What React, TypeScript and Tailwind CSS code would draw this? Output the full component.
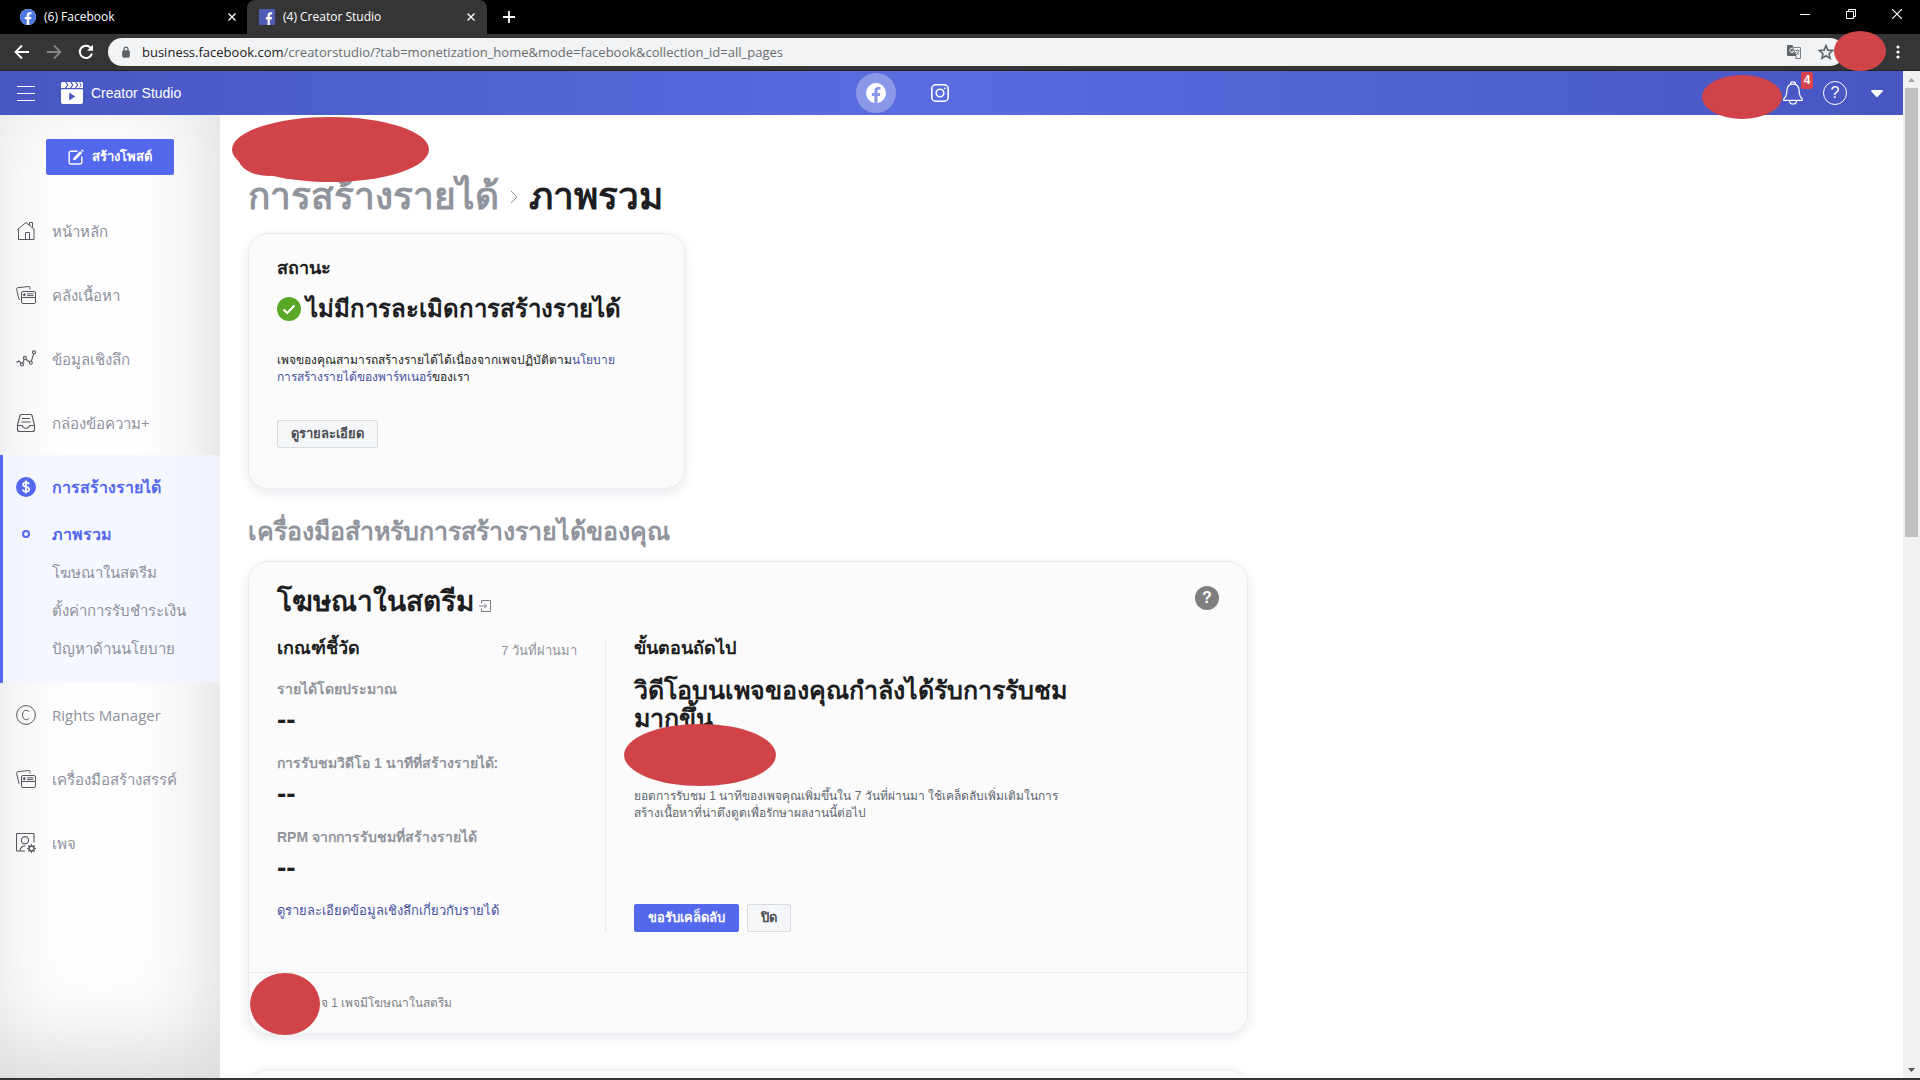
import React from 'react';
import clsx from 'clsx';

type IconProps = { className?: string };

const FacebookRound = ({ className }: IconProps) => (
  <svg viewBox="0 0 24 24" className={className} fill="currentColor">
    <path d="M24 12a12 12 0 1 0-13.9 11.9v-8.4H7.1V12h3V9.4c0-3 1.8-4.7 4.6-4.7 1.3 0 2.6.2 2.6.2v3h-1.5c-1.5 0-2 .9-2 1.9V12h3.4l-.5 3.5h-2.9v8.4A12 12 0 0 0 24 12z" />
  </svg>
);

const FacebookSquare = ({ className }: IconProps) => (
  <svg viewBox="0 0 16 16" className={className}>
    <rect width="16" height="16" fill="#4f5bb5" />
    <path
      d="M8.6 16v-5.6H6.8V8h1.8V6.3c0-2 1.1-3.1 2.9-3.1.8 0 1.5.1 1.7.2v2.1h-1.1c-.9 0-1.2.4-1.2 1.1V8h2.2l-.3 2.4h-1.9V16z"
      fill="#fff"
    />
  </svg>
);

const StudioLogo = () => (
  <svg viewBox="0 0 22 22" className="w-[22px] h-[22px]" fill="#fff">
    <path d="M0 7.200h22V20a2 2 0 0 1-2 2H2a2 2 0 0 1-2-2zM8.200 10.500v8l6-4z" fillRule="evenodd" />
    <path d="M1.500 0H4l2 3-2 3H0V1.500A1.500 1.500 0 0 1 1.500 0zM5.400 0H9l2 3-2 3H5.400l2-3zM10.400 0H14l2 3-2 3h-3.600l2-3zM15.400 0h5.100A1.500 1.500 0 0 1 22 1.500V6h-6.600l2-3z" />
    <path d="M18.600.6 20.200 3l-1.600 2.400" fill="none" stroke="#4c5ac9" strokeWidth="1" />
  </svg>
);

const InstagramIcon = () => (
  <svg viewBox="0 0 18 18" className="w-[18px] h-[18px]" fill="none" stroke="#fff" strokeWidth="1.600">
    <rect x=".8" y=".8" width="16.400" height="16.400" rx="4" />
    <circle cx="9" cy="9" r="3.800" />
    <circle cx="13.800" cy="4.300" r=".6" fill="#fff" strokeWidth=".8" />
  </svg>
);

const BellIcon = () => (
  <svg viewBox="0 0 20 24" className="w-5 h-6" fill="none" stroke="#fff" strokeWidth="1.200">
    <path d="M.8 19.400v-1.600c1.900-1.300 2.500-2.700 2.800-5.600l.4-3.600C4.400 5.200 6.700 3.200 10 3.200s5.600 2 6 5.400l.4 3.600c.3 2.900.9 4.300 2.800 5.600v1.600z" />
    <path d="M7.600 3.600V2.400C7.600 1.300 8.600.8 10 .8s2.400.5 2.400 1.600v1.200M6.400 19.600c.2 2.200 1.600 3.400 3.600 3.400s3.400-1.200 3.600-3.400" />
  </svg>
);

const HomeIcon = ({ className }: IconProps) => (
  <svg viewBox="0 0 20 20" className={className} fill="none" stroke="currentColor" strokeWidth="1">
    <path d="M1.500 8.500 10 1.500l8.500 7M2.500 8v10.500h15.500V8M9.500 18.500v-7h4v7M13.500 4V1.500h3v5" />
  </svg>
);

const LibraryIcon = ({ className }: IconProps) => (
  <svg viewBox="0 0 20 20" className={className} fill="none" stroke="currentColor" strokeWidth="1">
    <path d="M3.500 14.500H3L.6 4.200c-.2-.8.2-1.400 1-1.500L13 1.500c.6 0 1 .3 1 1V4.500" />
    <rect x="5.500" y="6.500" width="14" height="12" rx="1.500" />
    <path d="M5.500 12.500h14M11 8.800h6.500M11 10.600h6.500" />
    <circle cx="8.300" cy="9.700" r="1" fill="currentColor" />
  </svg>
);

const InsightsIcon = ({ className }: IconProps) => (
  <svg viewBox="0 0 20 20" className={className} fill="none" stroke="currentColor" strokeWidth="1.100">
    <path d="M.5 13.500 3 12l2.300 2.300M6.500 14.500l1.800-4.200M10 10.200l3.700 2.800M15.300 12.400l2.400-7.600" />
    <circle cx="6" cy="15.500" r="1.500" />
    <circle cx="8.800" cy="8.900" r="1.500" />
    <circle cx="14.800" cy="13.800" r="1.500" />
    <circle cx="18" cy="3.300" r="1.500" />
  </svg>
);

const InboxIcon = ({ className }: IconProps) => (
  <svg viewBox="0 0 20 20" className={className} fill="none" stroke="currentColor" strokeWidth="1.100">
    <path d="M1.500 12 4 2.500c.2-.7.700-1 1.400-1h9.200c.7 0 1.200.3 1.400 1L18.500 12v4.500c0 1.300-.7 2-2 2h-13c-1.300 0-2-.7-2-2z" />
    <path d="M1.500 12.500h4.800c.4 1.800 1.700 2.800 3.700 2.800s3.300-1 3.700-2.800h4.800M6 5.500h8M5.500 9h9" />
  </svg>
);

const DollarIcon = ({ className }: IconProps) => (
  <svg viewBox="0 0 20 20" className={className}>
    <circle cx="10" cy="10" r="10" fill="#5468ee" />
    <path
      d="M13 7.300C12.700 6 11.600 5.400 10 5.400c-1.800 0-3 .8-3 2.200 0 3.200 6.200 1.500 6.200 4.700 0 1.500-1.300 2.400-3.200 2.400-1.800 0-3-.8-3.200-2.200M10 3.500v13"
      fill="none"
      stroke="#fff"
      strokeWidth="1.700"
    />
  </svg>
);

const RightsIcon = ({ className }: IconProps) => (
  <svg viewBox="0 0 20 20" className={className} fill="none" stroke="currentColor" strokeWidth="1">
    <circle cx="10" cy="10" r="9.400" />
    <path d="M13 7C12.500 5.800 11.600 5.300 10.300 5.300c-2.400 0-3.800 1.800-3.800 4.700s1.400 4.700 3.800 4.700c1.300 0 2.200-.6 2.700-1.700" />
  </svg>
);

const PageIcon = ({ className }: IconProps) => (
  <svg viewBox="0 0 20 20" className={className} fill="none" stroke="currentColor" strokeWidth="1.100">
    <path d="M18 9.500v-8c0-.6-.4-1-1-1H1.500c-.6 0-1 .4-1 1v15.500c0 .6.400 1 1 1h7.500M4 18c0-3 1.500-4.800 5.500-5.200" />
    <circle cx="9" cy="7.200" r="3.600" />
    <circle cx="15.500" cy="15.500" r="2.500" strokeWidth="1.600" />
    <path
      d="M15.500 11v1.500M15.500 18.500V20M11 15.500h1.500M18.500 15.500H20M12.400 12.400l1 1M17.600 17.600l1 1M18.600 12.400l-1 1M13.400 17.600l-1 1"
      strokeWidth="1.100"
    />
  </svg>
);

const ComposeIcon = () => (
  <svg viewBox="0 0 16 16" className="w-4 h-4" fill="none" stroke="#fff" strokeWidth="1.400">
    <path d="M9.500 2.200H3A1.800 1.800 0 0 0 1.200 4v9.200A1.800 1.800 0 0 0 3 15h9a1.800 1.800 0 0 0 1.800-1.800V7.500" />
    <path d="m5 11.300.6-2.600 6.600-6.600 2 2-6.600 6.600zM13 1.300l1-1 1.800 1.800-1 1z" fill="#fff" stroke="none" />
  </svg>
);

const topItems = [
  { label: 'หน้าหลัก', Icon: HomeIcon },
  { label: 'คลังเนื้อหา', Icon: LibraryIcon },
  { label: 'ข้อมูลเชิงลึก', Icon: InsightsIcon },
  { label: 'กล่องข้อความ+', Icon: InboxIcon },
];

const bottomItems = [
  { label: 'Rights Manager', Icon: RightsIcon },
  { label: 'เครื่องมือสร้างสรรค์', Icon: LibraryIcon },
  { label: 'เพจ', Icon: PageIcon },
];

const subItems = ['ภาพรวม', 'โฆษณาในสตรีม', 'ตั้งค่าการรับชำระเงิน', 'ปัญหาด้านนโยบาย'];

const metrics = [
  'รายได้โดยประมาณ',
  'การรับชมวิดีโอ 1 นาทีที่สร้างรายได้:',
  'RPM จากการรับชมที่สร้างรายได้',
];

const CloseTab = () => (
  <svg viewBox="0 0 8 8" className="w-2 h-2" stroke="#fff" strokeWidth="1.400">
    <path d="M.5.5l7 7M7.500.5l-7 7" />
  </svg>
);

const BrowserBar = () => (
  <div className="shrink-0 font-['Open_Sans','Noto_Sans',sans-serif]">
    <div className="flex h-[34px] bg-black text-white text-xs">
      <div className="flex items-center w-[247px] pl-5 pr-[11px]">
        <span className="flex items-center justify-center w-4 h-4 rounded-full bg-white">
          <FacebookRound className="w-4 h-4 text-[#4d76e3]" />
        </span>
        <span className="ml-2 flex-1">(6) Facebook</span>
        <button aria-label="Close tab">
          <CloseTab />
        </button>
      </div>
      <div className="flex items-center w-60 pl-3 pr-3 rounded-t-lg bg-[#353535]">
        <FacebookSquare className="w-4 h-4" />
        <span className="ml-2 flex-1">(4) Creator Studio</span>
        <button aria-label="Close tab">
          <CloseTab />
        </button>
      </div>
      <button aria-label="New tab" className="ml-4">
        <svg viewBox="0 0 12 12" className="w-3 h-3" stroke="#fff" strokeWidth="1.800">
          <path d="M6 0v12M0 6h12" />
        </svg>
      </button>
      <div className="ml-auto flex items-start gap-9 pt-[9px] pr-[18px]">
        <button aria-label="Minimize">
          <svg viewBox="0 0 10 10" className="w-[10px] h-[10px]" stroke="#fff">
            <path d="M0 5.500h10" />
          </svg>
        </button>
        <button aria-label="Restore">
          <svg viewBox="0 0 10 10" className="w-[10px] h-[10px]" stroke="#fff" fill="none">
            <path d="M.5 2.500h7v7h-7zM2.500 2.500v-2h7v7h-2" />
          </svg>
        </button>
        <button aria-label="Close">
          <svg viewBox="0 0 10 10" className="w-[10px] h-[10px]" stroke="#fff" strokeWidth="1.200">
            <path d="M0 0l10 10M10 0L0 10" />
          </svg>
        </button>
      </div>
    </div>
    <div className="relative flex items-center h-[37px] pl-[14px] pr-5 bg-[#353535] border-b border-[#222]">
      <div className="flex gap-4">
        <svg viewBox="0 0 16 16" className="w-4 h-4" fill="none" stroke="#fff" strokeWidth="1.800">
          <path d="M15 8H2M8 1.500 1.500 8 8 14.500" />
        </svg>
        <svg viewBox="0 0 16 16" className="w-4 h-4" fill="none" stroke="#858585" strokeWidth="1.800">
          <path d="M1 8h13M8 1.500 14.500 8 8 14.500" />
        </svg>
        <svg viewBox="0 0 16 16" className="w-4 h-4" fill="none" stroke="#fff" strokeWidth="2">
          <path d="M13.300 4.600A6.200 6.200 0 1 0 14 9.500" />
          <path d="M15 .8v6H9z" fill="#fff" stroke="none" />
        </svg>
      </div>
      <div className="flex flex-1 items-center h-7 ml-[14px] mr-[52px] pl-3 pr-2.5 rounded-full bg-[#f1f3f4]">
        <svg viewBox="0 0 12 14" className="w-3 h-3" fill="none" stroke="#5f6368">
          <rect x="2" y="5.500" width="8" height="7.500" rx="1" fill="#5f6368" />
          <path d="M3.700 5.500V3.600a2.300 2.300 0 0 1 4.600 0v1.900" strokeWidth="1.400" />
        </svg>
        <p className="flex-1 ml-2.5 pt-px text-[13px] text-[#6b6e71]">
          <span className="text-[#202124]">business.facebook.com</span>
          /creatorstudio/?tab=monetization_home&mode=facebook&collection_id=all_pages
        </p>
        <svg viewBox="0 0 14 14" className="w-[14px] h-[14px] mr-[17px]">
          <path d="M0 1a1 1 0 0 1 1-1h4.500l1 2.500L9.500 11H1a1 1 0 0 1-1-1z" fill="#5f6368" />
          <path d="M6.800 2.500H13.500v11H8.500l1-2.500" fill="none" stroke="#7d8084" />
          <path d="M6.800 4.200A2.200 2.200 0 1 0 7 6.200H4.700" fill="none" stroke="#fff" />
          <path d="M8.500 5.500h4M10.500 4.500v1M12 5.500c-.4 2-1.500 3.400-3 4.400M9.400 7l2.800 3" fill="none" stroke="#7d8084" />
        </svg>
        <svg viewBox="0 0 24 24" className="w-4 h-4" fill="none" stroke="#5f6368" strokeWidth="2.400">
          <path d="M12 2.500l2.800 6.700 7.200.6-5.500 4.700 1.700 7L12 17.700l-6.200 3.800 1.700-7L2 9.800l7.200-.6z" />
        </svg>
      </div>
      <span className="absolute z-10 -top-[3px] right-[34px] w-[52px] h-10 rounded-[50%] bg-[#d04449]" />
      <svg viewBox="0 0 4 14" className="w-1 h-[14px]" fill="#fff">
        <circle cx="2" cy="2" r="1.600" />
        <circle cx="2" cy="7" r="1.600" />
        <circle cx="2" cy="12" r="1.600" />
      </svg>
    </div>
  </div>
);

const Header = () => (
  <header className="relative flex items-center h-11 shrink-0 pl-[17px] pr-5 text-white bg-[linear-gradient(90deg,#4856c2,#5a6ce0_48%,#4856c2)]">
    <button aria-label="Menu" className="flex flex-col gap-1.5 w-[18px]">
      <span className="h-px w-full bg-white" />
      <span className="h-px w-full bg-white" />
      <span className="h-px w-full bg-white" />
    </button>
    <a href="#home" className="flex items-center gap-2 ml-[26px] text-sm">
      <StudioLogo />
      Creator Studio
    </a>
    <div className="absolute inset-y-0 left-[45%] flex items-center gap-[35px]">
      <button aria-label="Facebook" className="flex items-center justify-center w-10 h-10 rounded-full bg-white/30">
        <FacebookRound className="w-5 h-5" />
      </button>
      <button aria-label="Instagram">
        <InstagramIcon />
      </button>
    </div>
    <div className="relative flex items-center ml-auto">
      <span className="absolute -top-1.5 right-[101px] w-20 h-11 rounded-[50%] bg-[#d04449] z-10" />
      <button aria-label="Notifications" className="relative mr-5">
        <BellIcon />
        <span className="absolute -top-[9px] -right-[10px] w-3 h-[17px] rounded-xs bg-[#d8434a] text-xs leading-[17px] font-bold text-center">
          4
        </span>
      </button>
      <button aria-label="Help" className="w-6 h-6 mr-6 rounded-full border border-white text-base leading-5">
        ?
      </button>
      <button aria-label="Account">
        <svg viewBox="0 0 12 7" className="w-3 h-[7px]" fill="#fff">
          <path d="M1 0h10c1 0 1.200 1 .6 1.600L7 6.400a1.400 1.400 0 0 1-2 0L.4 1.600C-.2 1 0 0 1 0z" />
        </svg>
      </button>
    </div>
  </header>
);

const NavItem = ({ label, Icon }: { label: string; Icon: React.FC<IconProps> }) => (
  <a href="#nav" className="flex items-center gap-4 h-16 pl-4 text-[15px] text-[#8d919e]">
    <Icon className="w-5 h-5 text-[#55585f]" />
    {label}
  </a>
);

const Sidebar = () => (
  <aside className="w-[220px] shrink-0 pt-6 whitespace-nowrap font-['Open_Sans','Liberation_Sans',Arial,sans-serif] bg-[#fefefe] shadow-[inset_-10px_-30px_80px_rgba(0,0,0,0.14)]">
    <button className="flex items-center justify-center gap-2 w-32 h-9 mx-auto rounded-xs bg-[#5468ee] text-[13px] font-bold text-white">
      <ComposeIcon />
      สร้างโพสต์
    </button>
    <nav className="mt-6">
      {topItems.map((item) => (
        <NavItem key={item.label} {...item} />
      ))}
      <div className="h-[228px] border-l-[3px] border-[#5468ee] bg-[#f2f5ff]/70">
        <a href="#monetization" className="flex items-center gap-4 h-16 pl-[13px] text-base font-bold text-[#5468ee]">
          <DollarIcon className="w-5 h-5" />
          การสร้างรายได้
        </a>
        <div className="-mt-1">
          {subItems.map((label, i) => (
            <a
              key={label}
              href="#sub"
              className={clsx(
                'flex items-center h-[38px] pl-[13px] gap-4',
                i === 0 ? 'text-base font-bold text-[#5468ee]' : 'text-[15px] text-[#8d919e]'
              )}
            >
              <span className="flex justify-center w-5">
                {i === 0 && <span className="w-2 h-2 rounded-full border-2 border-[#5468ee]" />}
              </span>
              {label}
            </a>
          ))}
        </div>
      </div>
      {bottomItems.map((item) => (
        <NavItem key={item.label} {...item} />
      ))}
    </nav>
  </aside>
);

const cardClass = 'relative rounded-[20px] border border-[#ebecf0] bg-[#fbfbfb] shadow-[0_4px_12px_rgba(40,40,90,0.1)]';

const StatusCard = () => (
  <section className={clsx(cardClass, 'w-[437px] px-7 pt-[22px] pb-10')}>
    <h3 className="text-lg leading-6 font-bold">สถานะ</h3>
    <div className="flex items-center gap-[5px] mt-[13px]">
      <svg viewBox="0 0 24 24" className="w-6 h-6">
        <circle cx="12" cy="12" r="12" fill="#5aa828" />
        <path d="M6.500 12.500l3.700 3.500 7.300-7.500" fill="none" stroke="#fff" strokeWidth="2" />
      </svg>
      <h2 className="text-2xl leading-8 font-bold">ไม่มีการละเมิดการสร้างรายได้</h2>
    </div>
    <p className="mt-[27px] text-xs leading-[17px]">
      เพจของคุณสามารถสร้างรายได้ได้เนื่องจากเพจปฏิบัติตาม
      <a href="#policy" className="text-[#4751a3]">
        นโยบาย
        <br />
        การสร้างรายได้ของพาร์ทเนอร์
      </a>
      ของเรา
    </p>
    <button className="h-7 mt-[34px] px-[13px] rounded-xs border border-[#d8dbe0] bg-[#f5f6f7] text-[13px] font-bold text-[#4b4f56]">
      ดูรายละเอียด
    </button>
  </section>
);

const AdsCard = () => (
  <section className={clsx(cardClass, 'max-w-[1000px]')}>
    <div className="px-7 pt-5 pb-10">
      <div className="flex items-center justify-between">
        <h2 className="flex items-center gap-[5px] text-[28px] leading-10 font-bold">
          โฆษณาในสตรีม
          <svg viewBox="0 0 12 12" className="w-3 h-3 mt-2" fill="none" stroke="#7b7e85">
            <path d="M2.500 3.500v-3h9v11h-9v-3M0 6h7.500M5.500 4l2 2-2 2" />
          </svg>
        </h2>
        <button
          aria-label="Help"
          className="w-6 h-6 mb-2 rounded-full bg-[#7f7f7f] text-base leading-6 font-bold text-white"
        >
          ?
        </button>
      </div>
      <div className="flex mt-4">
        <div className="w-[329px] pr-7 border-r border-[#e9eaee]">
          <div className="flex items-start justify-between h-5">
            <h3 className="text-lg leading-5 font-bold">เกณฑ์ชี้วัด</h3>
            <span className="text-[13px] leading-[26px] text-[#90949c]">7 วันที่ผ่านมา</span>
          </div>
          {metrics.map((label) => (
            <div key={label} className="mt-[21px]">
              <h4 className="text-sm leading-5 font-bold text-[#90949c]">{label}</h4>
              <p className="mt-[9px] text-[28px] leading-6 font-bold">--</p>
            </div>
          ))}
          <a href="#insights" className="block mt-[21px] text-[13px] leading-5 text-[#4751a3]">
            ดูรายละเอียดข้อมูลเชิงลึกเกี่ยวกับรายได้
          </a>
        </div>
        <div className="relative pl-7">
          <h3 className="text-lg leading-5 font-bold">ขั้นตอนถัดไป</h3>
          <h2 className="mt-[18px] text-[25px] leading-7 font-bold">
            วิดีโอบนเพจของคุณกำลังได้รับการรับชม
            <br />
            มากขึ้น
          </h2>
          <span className="absolute top-[86px] left-[18px] w-[152px] h-[62px] rounded-[50%] bg-[#d04449]" />
          <p className="mt-14 text-xs leading-[17px] text-[#606770]">
            ยอดการรับชม 1 นาทีของเพจคุณเพิ่มขึ้นใน 7 วันที่ผ่านมา ใช้เคล็ดลับเพิ่มเติมในการ
            <br />
            สร้างเนื้อหาที่น่าดึงดูดเพื่อรักษาผลงานนี้ต่อไป
          </p>
          <div className="flex gap-2 mt-[82px] text-[13px] font-bold">
            <button className="h-7 px-[13px] rounded-xs border border-[#5468ee] bg-[#5468ee] text-white">
              ขอรับเคล็ดลับ
            </button>
            <button className="h-7 px-[13px] rounded-xs border border-[#d8dbe0] bg-[#f5f6f7] text-[#4b4f56]">ปิด</button>
          </div>
        </div>
      </div>
    </div>
    <div className="relative flex items-center h-[61px] pl-[72px] border-t border-[#e9eaee] text-xs text-[#7f8288]">
      จ 1 เพจมีโฆษณาในสตรีม
      <span className="absolute top-0 left-px w-[70px] h-[62px] rounded-[50%] bg-[#d04449]" />
    </div>
  </section>
);

const Scrollbar = () => (
  <div className="flex flex-col items-center w-[17px] shrink-0 bg-[#f1f1f1]">
    <svg viewBox="0 0 17 17" className="w-[17px] h-[17px]" fill="#a3a3a3">
      <path d="M5 11l3.500-4 3.500 4z" />
    </svg>
    <div className="w-[13px] h-[449px] bg-[#c1c1c1]" />
    <svg viewBox="0 0 17 17" className="w-[17px] h-[17px] mt-auto" fill="#505050">
      <path d="M5 7l3.500 4L12 7z" />
    </svg>
  </div>
);

const App = () => {
  return (
    <div className="flex flex-col h-screen overflow-hidden bg-white text-[#1c1e21] font-['Liberation_Sans',Arial,sans-serif]">
      <BrowserBar />
      <div className="flex flex-1 min-h-0">
        <div className="flex flex-col flex-1 min-w-0">
          <Header />
          <div className="flex flex-1 min-h-0">
            <Sidebar />
            <main className="relative flex-1 min-w-0 overflow-hidden pt-[58px] px-7 whitespace-nowrap">
              <h1 className="flex items-center mb-3 text-[37px] leading-[48px] font-bold">
                <a href="#monetization" className="text-[#90949c]">
                  การสร้างรายได้
                </a>
                <svg viewBox="0 0 8 14" className="w-2 h-[14px] mx-[11px]" fill="none" stroke="#90949c">
                  <path d="M1 1l6 6-6 6" />
                </svg>
                ภาพรวม
              </h1>
              <svg viewBox="0 0 198 66" className="absolute top-0.5 left-3 w-[198px] h-[66px]" fill="#d04449">
                <ellipse cx="98.500" cy="32.500" rx="98.500" ry="32.500" />
                <ellipse cx="37" cy="40" rx="31" ry="19" />
              </svg>
              <StatusCard />
              <h2 className="mt-[26px] mb-[14px] text-[25px] leading-8 font-bold text-[#90949c]">
                เครื่องมือสำหรับการสร้างรายได้ของคุณ
              </h2>
              <AdsCard />
              <div className={clsx(cardClass, 'max-w-[1000px] h-24 mt-[35px]')} />
            </main>
          </div>
        </div>
        <Scrollbar />
      </div>
      <div className="h-0.5 shrink-0 bg-[#353535]" />
    </div>
  );
};

export default App;
